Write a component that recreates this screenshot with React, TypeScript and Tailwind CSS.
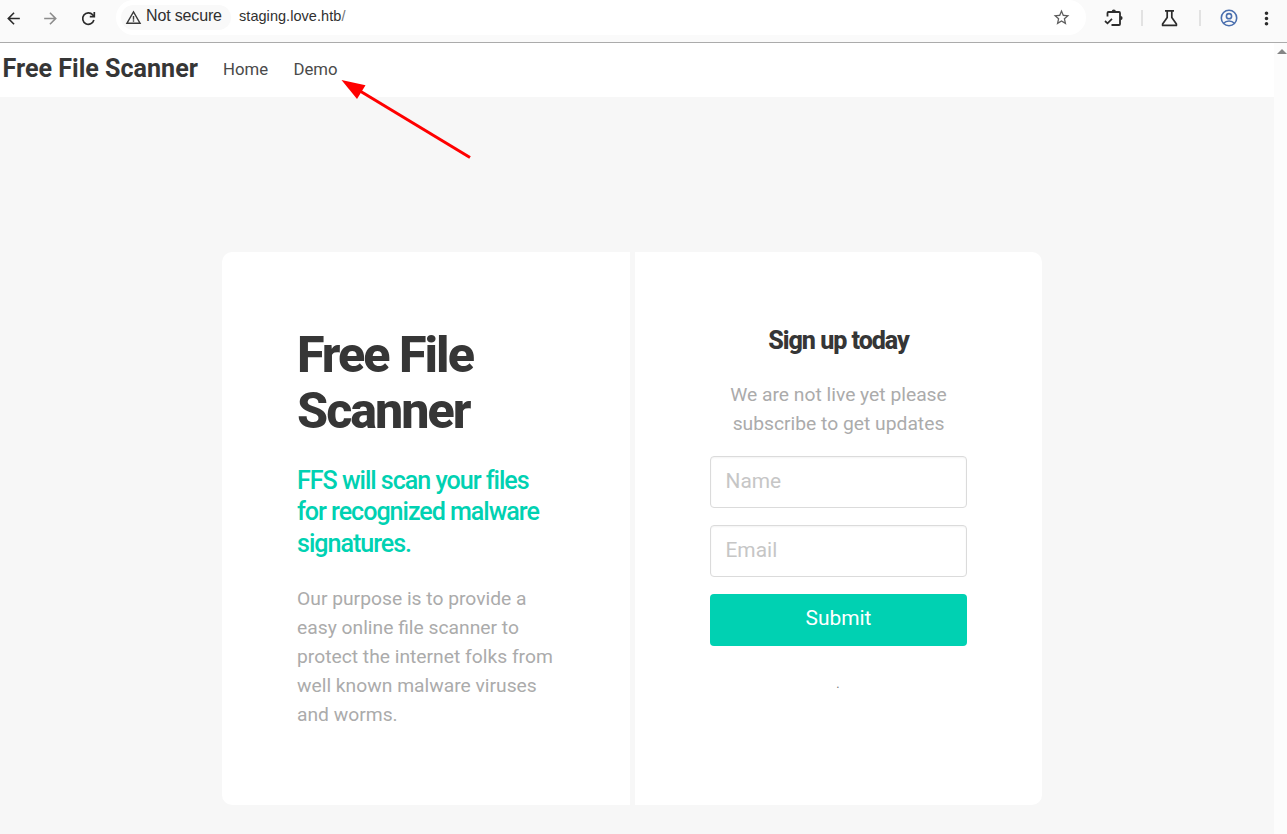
import React from "react";
import { MdArrowBack, MdArrowForward, MdWarningAmber, MdStarBorder, MdMoreVert } from "react-icons/md";

function Reload() {
  return (
    <svg width="15" height="15" viewBox="0 0 15 15" fill="none" stroke="#2b2b2b" strokeWidth="1.7">
      <path d="M12.900 9.100a5.700 5.700 0 1 1-1.200-5.300L13.300 5.400" />
      <path d="M13.300 1.100v4.600H8.800" strokeWidth="1.700" />
    </svg>
  );
}

function Puzzle() {
  return (
    <svg width="20" height="20" viewBox="0 0 20 20" fill="none" stroke="#2b2b2b" strokeWidth="1.800">
      <path d="M3.500 8.500V5a1 1 0 0 1 1-1h10.500a1 1 0 0 1 1 1v11a1 1 0 0 1-1 1H7.500" strokeLinejoin="round" />
      <path d="M7.700 3.500a2.100 2.100 0 0 1 4.200 0zM16.500 8a2.100 2.100 0 0 1 0 4.200z" fill="#2b2b2b" stroke="none" />
      <path d="M1 13l2.500 2.300 4.500-4.500" strokeWidth="1.700" />
    </svg>
  );
}

function Flask() {
  return (
    <svg width="17" height="18" viewBox="0 0 17 18" fill="none" stroke="#2b2b2b" strokeWidth="1.700" strokeLinejoin="round">
      <path d="M4 1.900h9M6.200 2v6.500L1.600 15v1.400h13.800V15l-4.600-6.500V2" />
    </svg>
  );
}

function Profile() {
  return (
    <svg width="18" height="18" viewBox="0 0 18 18" fill="none" stroke="#4a6fae" strokeWidth="1.600">
      <circle cx="9" cy="9" r="7.700" />
      <circle cx="9" cy="7.200" r="2.600" />
      <path d="M3.600 14.200c2.800-3 8-3 10.800 0" />
    </svg>
  );
}

function BrowserBar() {
  return (
    <header className="flex h-[43px] items-start border-b border-[#ababab] bg-[#fafafa]">
      <div className="flex h-9 w-[116px] items-center">
        <MdArrowBack className="ml-[4px] h-[19px] w-[19px] text-[#2b2b2b]" />
        <MdArrowForward className="ml-[18px] h-[19px] w-[19px] text-[#8c8c8c]" />
        <span className="ml-[21px]"><Reload /></span>
      </div>
      <div className="flex h-[35px] w-[970px] items-center rounded-full bg-white pl-[5px] pr-[15px]">
        <div className="flex h-[25px] w-[110px] items-center rounded-full bg-[#f9f9f9] pl-[4px]">
          <MdWarningAmber className="-mt-px h-[17px] w-[17px] text-[#3a3a3a]" />
          <span className="-mt-[3px] ml-[4px] whitespace-nowrap text-[16px] leading-5 tracking-[-0.150px] text-[#303030]">Not secure</span>
        </div>
        <span className="-mt-[3px] ml-[8px] text-[14.500px] leading-5 tracking-[0.050px] text-[#303030]">
          staging.love.htb<span className="text-[#777777]">/</span>
        </span>
        <MdStarBorder className="-mt-px ml-auto h-[19px] w-[19px] text-[#5e5e5e]" />
      </div>
      <div className="flex h-9 flex-1 items-center">
        <span className="ml-[18px]"><Puzzle /></span>
        <span className="ml-[17px] h-4 w-[2px] bg-[#e2e2e2]" />
        <span className="ml-[18px]"><Flask /></span>
        <span className="ml-[21px] h-4 w-[2px] bg-[#e2e2e2]" />
        <span className="ml-[18.500px]"><Profile /></span>
        <MdMoreVert className="ml-[18.500px] h-[21px] w-[21px] shrink-0 text-[#2b2b2b]" />
      </div>
    </header>
  );
}

function NavBar() {
  return (
    <nav className="flex h-[54px] items-center bg-white pl-[2.500px] font-[Roboto,sans-serif]">
      <span className="-mt-[3px] w-[220.500px] whitespace-nowrap text-[25.100px] font-bold leading-8 text-[#363636]">Free File Scanner</span>
      <a className="-mt-px w-[70.500px] text-[16.750px] text-[#4a4a4a]">Home</a>
      <a className="-mt-px text-[16.750px] text-[#4a4a4a]">Demo</a>
    </nav>
  );
}

function Intro() {
  return (
    <section className="w-[408px] rounded-l-[10px] bg-white p-[75px] pr-[70px]">
      <h1 className="text-[50.200px] font-extrabold leading-[56px] tracking-[-2px] text-[#363636]">Free File<br />Scanner</h1>
      <h2 className="mt-[26px] whitespace-nowrap text-[25.100px] font-medium leading-[31.400px] tracking-[-1.030px] text-[#00d1b2]">
        FFS will scan your files<br />for recognized malware<br />signatures.
      </h2>
      <p className="mt-[25px] whitespace-nowrap text-[19.280px] leading-[29px] text-[#ababab]">
        Our purpose is to provide a<br />easy online file scanner to<br />protect the internet folks from<br />well known malware viruses<br />and worms.
      </p>
    </section>
  );
}

const field =
  "block h-[52px] w-full rounded-[4px] border border-[#dbdbdb] bg-white pl-[14.500px] pr-[15px] pb-[3px] text-[20.900px] text-[#363636] shadow-[inset_0_1px_2px_rgba(10,10,10,0.05)] placeholder:text-[#c6c6c6]";

function SignUp() {
  return (
    <section className="w-[407px] rounded-r-[10px] bg-white p-[75px] text-center">
      <h3 className="text-[25.100px] font-extrabold leading-[28.200px] tracking-[-1.050px] text-[#363636]">Sign up today</h3>
      <p className="mt-[25px] whitespace-nowrap text-[19.280px] leading-[29px] text-[#ababab]">
        We are not live yet please<br />subscribe to get updates
      </p>
      <form className="mt-[18px] flex flex-col gap-[17px]" onSubmit={(e) => e.preventDefault()}>
        <input className={field} type="text" placeholder="Name" />
        <input className={field} type="email" placeholder="Email" />
        <button className="h-[52px] rounded-[4px] bg-[#00d1b2] pb-[3px] text-[20.900px] text-white" type="submit">Submit</button>
      </form>
      <p className="-ml-px mt-[28px] text-[12.500px] leading-[19px] text-[#7a7a7a]">.</p>
    </section>
  );
}

export default function App() {
  return (
    <div className="relative flex h-[834px] w-[1287px] flex-col overflow-hidden bg-[#f7f7f7] font-['Liberation_Sans',Arial,sans-serif]">
      <BrowserBar />
      <div className="flex flex-1">
        <div className="w-[1274px]">
          <NavBar />
          <main className="flex pl-[222px] pt-[155px] font-[Roboto,sans-serif]">
            <div className="flex h-[553px] gap-[5px]">
              <Intro />
              <SignUp />
            </div>
          </main>
        </div>
        <div className="flex w-[13px] justify-end bg-[#fcfcfc] pt-[6px]">
          <svg width="10" height="5" viewBox="0 0 10 5"><path d="M0 5L5 0l5 5z" fill="#858585" /></svg>
        </div>
      </div>
      <svg className="absolute left-[330px] top-[70px]" width="150" height="100" viewBox="0 0 150 100">
        <path d="M30 21L140 87.500" stroke="#ff0000" strokeWidth="3" />
        <path d="M11.500 10L35.500 15.200 27 29z" fill="#ff0000" />
      </svg>
    </div>
  );
}
